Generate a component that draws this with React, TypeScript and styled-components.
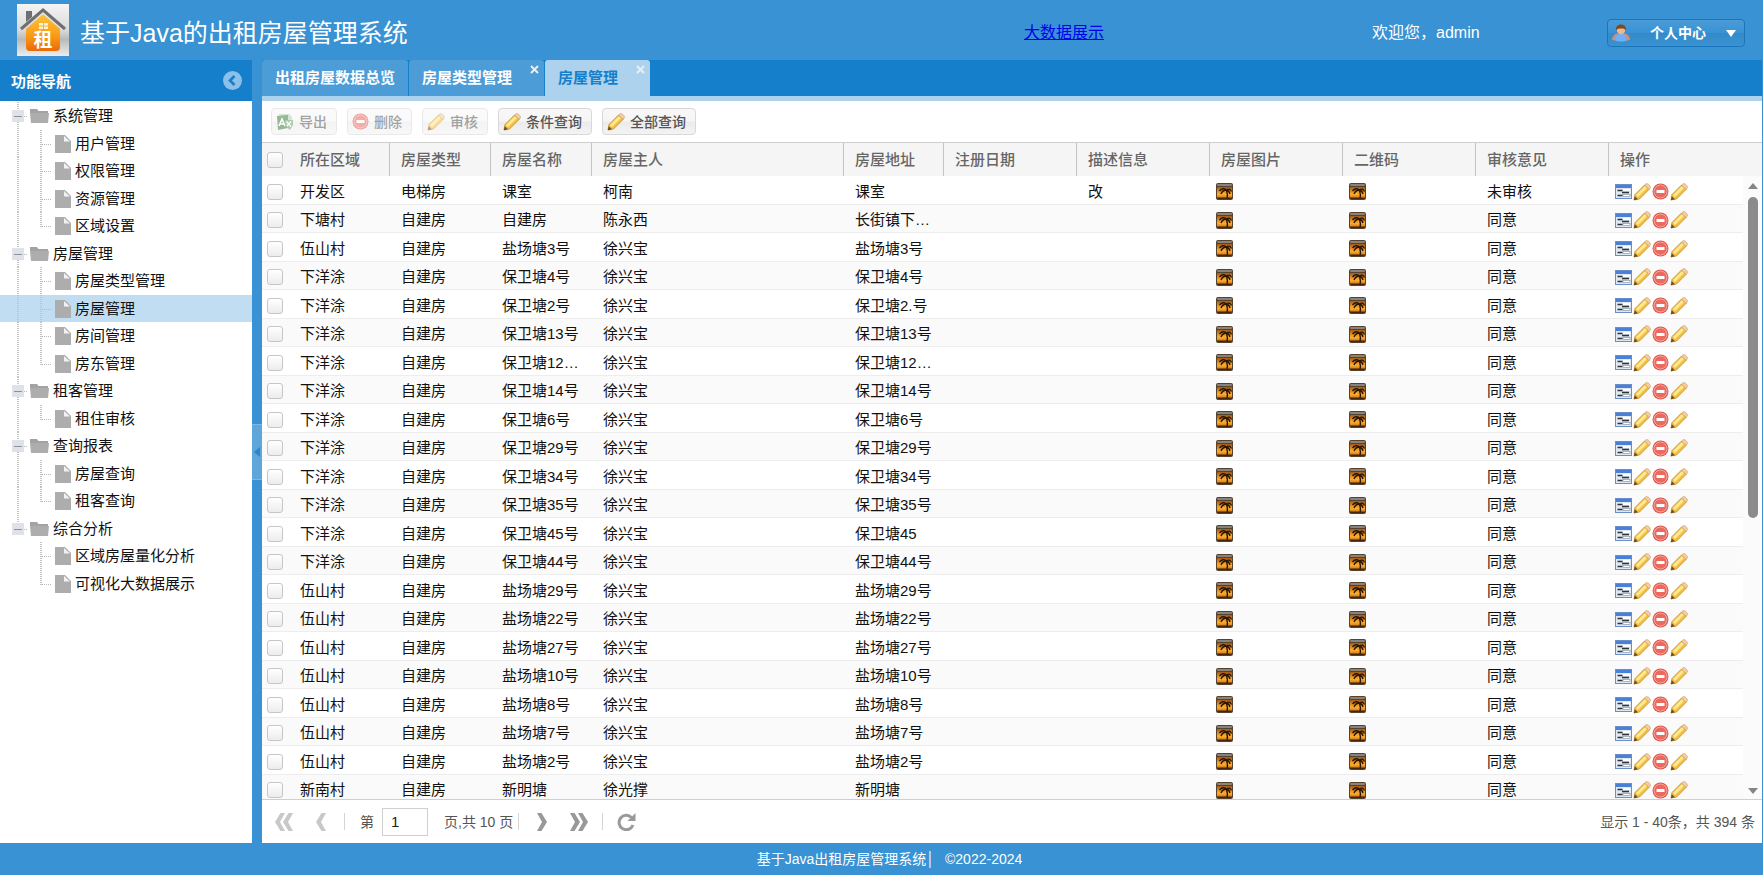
import React from 'react';
import styled, { createGlobalStyle } from 'styled-components';

const GlobalStyle = createGlobalStyle`
  * { box-sizing: border-box; }
  html, body, #root { height: 100%; }
  body {
    margin: 0;
    overflow: hidden;
    font-family: "Liberation Sans", "Noto Sans CJK SC", sans-serif;
    font-size: 15px;
    color: #111;
  }
  button, input { font: inherit; }
  svg { display: block; flex: none; }
`;

const Page = styled.div`
  display: flex;
  flex-direction: column;
  height: 100vh;
  background: #3892d3;
`;

/* ---------- top bar ---------- */

const TopBar = styled.header`
  display: grid;
  grid-template-columns: 1024fr 348fr 235fr 156px;
  align-items: center;
  height: 60px;
  flex: none;
  color: #fff;
`;

const Brand = styled.div`
  display: flex;
  align-items: center;
  gap: 11px;
  padding-left: 17px;
`;

const Title = styled.h1`
  margin: 0;
  padding-top: 6px;
  font-size: 25px;
  line-height: 36px;
  font-weight: 400;
  white-space: nowrap;
`;

const BigDataLink = styled.a`
  justify-self: start;
  padding-top: 6px;
  font-size: 16px;
  line-height: 24px;
  color: #0000ee;
  text-decoration: underline;
`;

const Welcome = styled.span`
  padding-top: 6px;
  font-size: 16px;
  line-height: 24px;
`;

const UserButton = styled.button`
  display: flex;
  align-items: center;
  width: 138px;
  height: 28px;
  margin-top: 6px;
  padding: 0 8px 0 4px;
  border: 1px solid #1c75bb;
  border-radius: 4px;
  background: linear-gradient(#4b9cd7, #3892d3 50%, #358ac8 51%, #3892d3);
  color: #fff;
  font-size: 14px;
  font-weight: 700;
  line-height: 20px;
`;

const UserLabel = styled.span`
  flex: 1;
  text-align: center;
`;

/* ---------- main area ---------- */

const Main = styled.div`
  display: flex;
  flex: 1;
  min-height: 0;
  padding-right: 1px;
`;

const Sidebar = styled.nav`
  display: flex;
  flex-direction: column;
  width: 252px;
  flex: none;
  background: #fff;
`;

const SidebarHeader = styled.div`
  display: flex;
  align-items: center;
  justify-content: space-between;
  height: 41px;
  padding: 0 10px 0 11px;
  background: #157fcc;
  color: #fff;
  font-weight: 700;
`;

const IconButton = styled.button`
  display: flex;
  align-items: center;
  justify-content: center;
  padding: 0;
  border: 0;
  background: none;
  color: inherit;
`;

const Tree = styled.ul`
  margin: 0;
  padding: 1px 0 0;
  list-style: none;
`;

const TreeItem = styled.li<{ $selected?: boolean }>`
  display: flex;
  align-items: center;
  height: 28px;
  overflow: hidden;
  background: ${(p) => (p.$selected ? '#c1ddf1' : 'transparent')};
  &:nth-child(even) { height: 27px; }
`;

const TreeLink = styled.a`
  padding-left: 4px;
  color: #111;
  line-height: 22px;
  text-decoration: none;
  white-space: nowrap;
`;

const Splitter = styled.div`
  display: flex;
  align-items: center;
  width: 10px;
  flex: none;
`;

const SplitHandle = styled.button`
  display: flex;
  align-items: center;
  justify-content: center;
  width: 10px;
  height: 56px;
  padding: 0;
  border: 1px solid #7db8e3;
  border-width: 1px 0;
  background: #5fa7db;
`;

const Panel = styled.main`
  display: flex;
  flex-direction: column;
  flex: 1;
  min-width: 0;
  background: #fff;
`;

const TabBar = styled.div`
  display: flex;
  gap: 1px;
  height: 41px;
  flex: none;
  border-bottom: 5px solid #add2ed;
  background: #157fcc;
`;

const Tab = styled.div<{ $active?: boolean }>`
  position: relative;
  display: flex;
  border-radius: 3px 3px 0 0;
  background: ${(p) => (p.$active ? '#add2ed' : '#4b9cd7')};
  color: ${(p) => (p.$active ? '#157fcc' : '#fff')};
`;

const TabButton = styled.button<{ $closable?: boolean }>`
  padding: 0 ${(p) => (p.$closable ? 32 : 13)}px 0 13px;
  border: 0;
  background: none;
  color: inherit;
  font-weight: 700;
  line-height: 22px;
`;

const TabClose = styled(IconButton)`
  position: absolute;
  top: 5px;
  right: 5px;
  color: #e4f1fa;
`;

const Toolbar = styled.div`
  display: flex;
  align-items: center;
  gap: 10px;
  height: 41px;
  flex: none;
  padding: 0 9px;
`;

const ToolButton = styled.button`
  display: flex;
  align-items: center;
  gap: 5px;
  height: 27px;
  padding: 0 9px 0 4px;
  border: 1px solid #d8d8d8;
  border-radius: 4px;
  background: linear-gradient(#f8f8f8, #f5f5f5 48%, #ebebeb 52%, #f3f3f3);
  color: #555;
  font-size: 14px;
  font-weight: 500;
  line-height: 20px;
  white-space: nowrap;
  &:disabled { opacity: 0.55; }
`;

/* ---------- grid ---------- */

const GridView = styled.div`
  position: relative;
  flex: 1;
  min-height: 0;
  overflow: hidden;
  border-top: 1px solid #cfcfcf;
`;

const Table = styled.table`
  width: 100%;
  table-layout: fixed;
  border-collapse: separate;
  border-spacing: 0;
`;

const Col = styled.col<{ $w?: number }>`
  width: ${(p) => (p.$w ? `${p.$w}px` : 'auto')};
`;

const HeadCell = styled.th`
  height: 33px;
  padding: 0 0 0 11px;
  border-right: 1px solid #c4c4c4;
  background: #f5f5f5;
  color: #666;
  font-weight: 500;
  line-height: 22px;
  text-align: left;
  white-space: nowrap;
  &:first-child { padding-left: 5px; border-right: 0; }
  &:last-child { border-right: 0; }
`;

const Row = styled.tr`
  height: 29px;
  background: #fff;
  &:nth-child(even) { height: 28px; background: #fafafa; }
`;

const Cell = styled.td<{ $pad?: number }>`
  padding: 3px 0 0 ${(p) => p.$pad ?? 11}px;
  border-bottom: 1px solid #ededed;
  line-height: 22px;
  white-space: nowrap;
`;

const Checkbox = styled.input`
  appearance: none;
  display: block;
  width: 16px;
  height: 16px;
  margin: 0;
  border: 1px solid #c6c6c6;
  border-radius: 3px;
  background: linear-gradient(#fff, #ececec);
`;

const Actions = styled.div`
  display: flex;
  gap: 1px;
`;

const Rail = styled.div`
  position: absolute;
  top: 33px;
  right: 0;
  bottom: 0;
  display: flex;
  flex-direction: column;
  align-items: center;
  gap: 8px;
  width: 19px;
  padding: 7px 0 5px;
  background: #fbfbfb;
`;

const Track = styled.div`
  display: flex;
  flex: 1;
`;

const Thumb = styled.div`
  width: 10px;
  height: 55%;
  border-radius: 5px;
  background: #8b8b8b;
`;

/* ---------- paging ---------- */

const Pager = styled.div`
  display: flex;
  align-items: center;
  height: 44px;
  flex: none;
  padding: 0 7px 0 13px;
  border-top: 1px solid #cfcfcf;
  color: #555;
  font-size: 14px;
  line-height: 20px;
`;

const PageNav = styled.div`
  display: flex;
  align-items: center;
  gap: 23px;
`;

const PageForm = styled.label`
  display: flex;
  align-items: center;
  gap: 8px;
`;

const PageInput = styled.input`
  width: 46px;
  height: 28px;
  padding: 0 8px;
  border: 1px solid #cfcfcf;
  background: #fff;
  color: #222;
  font-size: 15px;
`;

const PageTotal = styled.span`
  padding-left: 16px;
  padding-right: 4px;
`;

const Divider = styled.span<{ $l: number; $r: number }>`
  width: 1px;
  height: 17px;
  margin: 0 ${(p) => p.$r}px 0 ${(p) => p.$l}px;
  background: #d4d4d4;
`;

const Summary = styled.span`
  margin-left: auto;
`;

const Footer = styled.footer`
  display: flex;
  justify-content: center;
  gap: 10px;
  height: 32px;
  flex: none;
  padding: 6px 0 0 16px;
  color: #fff;
  font-size: 14px;
  line-height: 20px;
`;

/* ---------- drawings ---------- */

const Logo = () => (
  <svg width="52" height="52" viewBox="0 0 52 52" aria-hidden="true">
    <defs>
      <linearGradient id="plate" x1="0" y1="0" x2="0" y2="1">
        <stop offset="0" stopColor="#f4f4f4" />
        <stop offset="0.5" stopColor="#dadada" />
        <stop offset="0.68" stopColor="#b9b9b9" />
        <stop offset="1" stopColor="#ededed" />
      </linearGradient>
      <linearGradient id="house" x1="0" y1="0" x2="0" y2="1">
        <stop offset="0" stopColor="#ffc33c" />
        <stop offset="0.6" stopColor="#f99a16" />
        <stop offset="1" stopColor="#ea6a06" />
      </linearGradient>
    </defs>
    <rect width="52" height="52" fill="url(#plate)" />
    <path d="M9 7h6v6l-6 5z" fill="#6d6f73" />
    <path d="M26 10 43 25v18a4 4 0 0 1-4 4H13a4 4 0 0 1-4-4V25z" fill="url(#house)" />
    <path d="M4 25 26 6l22 19" fill="none" stroke="#6d6f73" strokeWidth="3" />
    <path d="M22 19h4v2.500h-4zM27 19h4v2.500h-4zM22 22.500h4V25h-4zM27 22.500h4V25h-4z" fill="#fff6d8" />
    <text x="26" y="43" textAnchor="middle" fontSize="19" fontWeight="700" fill="#fff">租</text>
  </svg>
);

const UserIcon = () => (
  <svg width="18" height="18" viewBox="0 0 18 18" aria-hidden="true">
    <path d="M0 16c0-3 2-6 5-6.500h8c3 .5 5 3.500 5 6.500l-3 .5H3z" fill="#c98f78" />
    <path d="M3.500 16.500C3 12.500 5 9.500 9 9.500s6 3 5.500 7c-2 1.300-9 1.300-11 0z" fill="#6fb0fb" />
    <circle cx="9" cy="6" r="4.200" fill="#f0b98c" />
    <path d="M4 6.500C3.500 2.500 6 0.500 9 .5s5.500 2 5 6C13 4.800 11 4.500 9 4.500s-4 .3-5 2z" fill="#7d4a21" />
  </svg>
);

const CaretDown = () => (
  <svg width="10" height="7" viewBox="0 0 10 7" aria-hidden="true">
    <path d="M0 0h10L5 7z" fill="#fff" />
  </svg>
);

const CollapseIcon = () => (
  <svg width="19" height="19" viewBox="0 0 19 19" aria-hidden="true">
    <circle cx="9.500" cy="9.500" r="9.500" fill="#8cc0e8" />
    <path d="M11.500 5 7 9.500l4.500 4.500" fill="none" stroke="#157fcc" strokeWidth="2.600" />
  </svg>
);

const BranchGuide = ({ last }: { last?: boolean }) => (
  <svg width="49" height="28" viewBox="0 0 49 28" aria-hidden="true">
    <path d="M18 0v8" stroke="#c4c4c4" strokeWidth="2" strokeDasharray="1 1" />
    {!last && <path d="M18 20v8" stroke="#c4c4c4" strokeWidth="2" strokeDasharray="1 1" />}
    <path d="M24 14.500h4" stroke="#b8b8b8" strokeDasharray="1 1" />
    <rect x="12" y="8" width="12" height="12" fill="#dfe3e9" />
    <path d="M14 14.500h8" stroke="#8d9299" />
    <path d="M30 7h7l1.500 2H48v2H30z" fill="#a3a3a3" />
    <path d="M30 11h19l-1 10H31z" fill="#adadad" />
  </svg>
);

const LeafGuide = ({ last, trunk }: { last?: boolean; trunk: boolean }) => (
  <svg width="71" height="28" viewBox="0 0 71 28" aria-hidden="true">
    {trunk && <path d="M18 0v28" stroke="#c4c4c4" strokeWidth="2" strokeDasharray="1 1" />}
    <path d={last ? 'M41 0v15' : 'M41 0v28'} stroke="#c4c4c4" strokeWidth="2" strokeDasharray="1 1" />
    <path d="M42 14.500h9" stroke="#b8b8b8" strokeDasharray="1 1" />
    <path d="M55 5h10l6 6v12H55z" fill="#adadad" />
    <path d="M64 6v5.500h6z" fill="#f2f2f2" />
  </svg>
);

const SplitArrow = () => (
  <svg width="6" height="10" viewBox="0 0 6 10" aria-hidden="true">
    <path d="M6 0v10L0 5z" fill="#2a86cb" />
  </svg>
);

const CloseIcon = () => (
  <svg width="9" height="9" viewBox="0 0 9 9" aria-hidden="true">
    <path d="M1 1l7 7M8 1 1 8" stroke="currentColor" strokeWidth="2" />
  </svg>
);

const ExcelIcon = () => (
  <svg width="18" height="18" viewBox="0 0 18 18" aria-hidden="true">
    <path d="M3 1h10l3 3v9H3z" fill="#b5d3ae" />
    <path d="M1 3 12 2v13L2 17z" fill="#3f7f3f" />
    <path d="m3 13 3-7 3 7M4 11h4" fill="none" stroke="#fff" strokeWidth="1.500" />
    <path d="M9 7h8v5l-3 5-5-4z" fill="#6fa568" />
    <path d="m10.500 8.500 4.500 5m0-5-4 4.500" stroke="#fff" strokeWidth="1.300" />
  </svg>
);

const MinusIcon = () => (
  <svg width="17" height="17" viewBox="0 0 17 17" aria-hidden="true">
    <circle cx="8.500" cy="8.500" r="8" fill="#e2574c" />
    <circle cx="8.500" cy="8.500" r="6.500" fill="#ea6a5f" stroke="#f5a79f" />
    <rect x="4.500" y="7" width="8" height="3" rx="0.500" fill="#fff" />
  </svg>
);

const PencilIcon = () => (
  <svg width="18" height="18" viewBox="0 0 18 18" aria-hidden="true">
    <path d="m1 17 1-5.500L11.500 2l4.500 4.500L6.500 16z" fill="#f3c044" stroke="#c08a2c" strokeWidth="0.800" />
    <path d="m3 12 9-9 2 2-9 9z" fill="#ffe892" />
    <path d="M11.500 2 13 .8c1.700-.9 5 2 4.200 4.200L16 6.500z" fill="#f5cfa3" stroke="#cc9a5c" strokeWidth="0.700" />
    <path d="m.8 17.200 1-4 3 3z" fill="#6b4a24" />
  </svg>
);

const FormIcon = () => (
  <svg width="17" height="17" viewBox="0 0 17 17" aria-hidden="true">
    <rect x="0.500" y="1.500" width="16" height="14" fill="#dfe9f6" stroke="#6a8fc8" />
    <rect x="1" y="2" width="15" height="3" fill="#4a80d8" />
    <path d="M2.500 7.500h5M2.500 12.500h5" stroke="#333" strokeWidth="1.600" />
    <path d="M7 9.500h7" stroke="#333" strokeWidth="1.600" />
    <rect x="8" y="6" width="7" height="2" fill="#fff" />
    <rect x="8" y="11.500" width="7" height="2" fill="#fff" stroke="#7b8797" strokeWidth="0.600" />
  </svg>
);

const PhotoIcon = () => (
  <svg width="17" height="17" viewBox="0 0 17 17" aria-hidden="true">
    <defs>
      <linearGradient id="dusk" x1="0" y1="0" x2="0" y2="1">
        <stop offset="0" stopColor="#a85a12" />
        <stop offset="0.6" stopColor="#ffae2e" />
        <stop offset="1" stopColor="#c06a12" />
      </linearGradient>
    </defs>
    <rect width="17" height="17" rx="2" fill="#54432f" />
    <rect x="1" y="1" width="15" height="2" rx="1" fill="#8a837c" />
    <rect x="1" y="4" width="15" height="12" rx="1" fill="url(#dusk)" />
    <path
      d="M11 16c.8-3 .4-6-.5-9M10.500 7C8.500 4.800 5.500 5.500 3.500 8M10.500 7C7.500 7 6 8.500 5 11M10.500 7c2-1.500 4-1 5 1.500M10.500 7c2 .5 3 2 3.500 4"
      fill="none"
      stroke="#2a1606"
      strokeWidth="1.400"
    />
    <path d="M1 14.500h15V15a1 1 0 0 1-1 1H2a1 1 0 0 1-1-1z" fill="#4a2408" />
  </svg>
);

const Triangle = ({ down }: { down?: boolean }) => (
  <svg width="10" height="6" viewBox="0 0 10 6" aria-hidden="true">
    <path d={down ? 'M0 0h10L5 6z' : 'M0 6h10L5 0z'} fill="#858585" />
  </svg>
);

const Chevron = ({ double, back, color }: { double?: boolean; back?: boolean; color: string }) => (
  <svg width={double ? 18 : 10} height="18" viewBox={double ? '0 0 18 18' : '0 0 10 18'} aria-hidden="true">
    <g fill={color} transform={back ? `translate(${double ? 18 : 10} 0) scale(-1 1)` : undefined}>
      <path d="M0 0h4.500L10 9l-5.500 9H0l5-9z" />
      {double && <path d="M8 0h4.500L18 9l-5.500 9H8l5-9z" />}
    </g>
  </svg>
);

const RefreshIcon = () => (
  <svg width="19" height="18" viewBox="0 0 19 18" aria-hidden="true">
    <path d="M14.500 4.500A7.200 7.200 0 1 0 16 12" fill="none" stroke="#999" strokeWidth="3" />
    <path d="M18.500 0v8h-8z" fill="#999" />
  </svg>
);

/* ---------- data ---------- */

const groups = [
  { name: '系统管理', items: ['用户管理', '权限管理', '资源管理', '区域设置'] },
  { name: '房屋管理', items: ['房屋类型管理', '房屋管理', '房间管理', '房东管理'] },
  { name: '租客管理', items: ['租住审核'] },
  { name: '查询报表', items: ['房屋查询', '租客查询'] },
  { name: '综合分析', items: ['区域房屋量化分析', '可视化大数据展示'] },
];

const treeRows = groups.flatMap((g, gi) => {
  const lastGroup = gi === groups.length - 1;
  return [
    { name: g.name, leaf: false, last: lastGroup, trunk: true },
    ...g.items.map((name, i) => ({ name, leaf: true, last: i === g.items.length - 1, trunk: !lastGroup })),
  ];
});

const tools = [
  { label: '导出', icon: <ExcelIcon />, disabled: true },
  { label: '删除', icon: <MinusIcon />, disabled: true },
  { label: '审核', icon: <PencilIcon />, disabled: true },
  { label: '条件查询', icon: <PencilIcon />, disabled: false },
  { label: '全部查询', icon: <PencilIcon />, disabled: false },
];

const columns = ['所在区域', '房屋类型', '房屋名称', '房屋主人', '房屋地址', '注册日期', '描述信息', '房屋图片', '二维码', '审核意见', '操作'];
const widths = [27, 101, 101, 101, undefined, 100, 133, 133, 133, 133, 133, 153];

type House = { area: string; kind: string; name: string; owner: string; address: string; note: string; verdict: string };

const house = (area: string, name: string, address = name, owner = '徐兴宝'): House => ({
  area, kind: '自建房', name, owner, address, note: '', verdict: '同意',
});

const houses: House[] = [
  { area: '开发区', kind: '电梯房', name: '课室', owner: '柯南', address: '课室', note: '改', verdict: '未审核' },
  house('下塘村', '自建房', '长街镇下…', '陈永西'),
  house('伍山村', '盐场塘3号'),
  house('下洋涂', '保卫塘4号'),
  house('下洋涂', '保卫塘2号', '保卫塘2.号'),
  house('下洋涂', '保卫塘13号'),
  house('下洋涂', '保卫塘12…'),
  house('下洋涂', '保卫塘14号'),
  house('下洋涂', '保卫塘6号'),
  house('下洋涂', '保卫塘29号'),
  house('下洋涂', '保卫塘34号'),
  house('下洋涂', '保卫塘35号'),
  house('下洋涂', '保卫塘45号', '保卫塘45'),
  house('下洋涂', '保卫塘44号'),
  house('伍山村', '盐场塘29号'),
  house('伍山村', '盐场塘22号'),
  house('伍山村', '盐场塘27号'),
  house('伍山村', '盐场塘10号'),
  house('伍山村', '盐场塘8号'),
  house('伍山村', '盐场塘7号'),
  house('伍山村', '盐场塘2号'),
  house('新南村', '新明塘', '新明塘', '徐光撑'),
];

const HouseRow = ({ h }: { h: House }) => (
  <Row>
    <Cell $pad={5}><Checkbox type="checkbox" aria-label={h.name} /></Cell>
    <Cell>{h.area}</Cell>
    <Cell>{h.kind}</Cell>
    <Cell>{h.name}</Cell>
    <Cell>{h.owner}</Cell>
    <Cell>{h.address}</Cell>
    <Cell />
    <Cell>{h.note}</Cell>
    <Cell $pad={6}><IconButton aria-label="房屋图片"><PhotoIcon /></IconButton></Cell>
    <Cell $pad={6}><IconButton aria-label="二维码"><PhotoIcon /></IconButton></Cell>
    <Cell>{h.verdict}</Cell>
    <Cell $pad={6}>
      <Actions>
        <IconButton aria-label="详情"><FormIcon /></IconButton>
        <IconButton aria-label="编辑"><PencilIcon /></IconButton>
        <IconButton aria-label="删除"><MinusIcon /></IconButton>
        <IconButton aria-label="审核"><PencilIcon /></IconButton>
      </Actions>
    </Cell>
  </Row>
);

export default function App() {
  return (
    <>
      <GlobalStyle />
      <Page>
        <TopBar>
          <Brand>
            <Logo />
            <Title>基于Java的出租房屋管理系统</Title>
          </Brand>
          <BigDataLink href="#bigdata">大数据展示</BigDataLink>
          <Welcome>欢迎您，admin</Welcome>
          <UserButton>
            <UserIcon />
            <UserLabel>个人中心</UserLabel>
            <CaretDown />
          </UserButton>
        </TopBar>

        <Main>
          <Sidebar>
            <SidebarHeader>
              功能导航
              <IconButton aria-label="收起"><CollapseIcon /></IconButton>
            </SidebarHeader>
            <Tree>
              {treeRows.map((r) => (
                <TreeItem key={`${r.leaf}${r.name}`} $selected={r.leaf && r.name === '房屋管理'}>
                  {r.leaf ? <LeafGuide last={r.last} trunk={r.trunk} /> : <BranchGuide last={r.last} />}
                  <TreeLink href="#nav">{r.name}</TreeLink>
                </TreeItem>
              ))}
            </Tree>
          </Sidebar>

          <Splitter>
            <SplitHandle aria-label="折叠导航"><SplitArrow /></SplitHandle>
          </Splitter>

          <Panel>
            <TabBar>
              <Tab><TabButton>出租房屋数据总览</TabButton></Tab>
              <Tab>
                <TabButton $closable>房屋类型管理</TabButton>
                <TabClose aria-label="关闭"><CloseIcon /></TabClose>
              </Tab>
              <Tab $active>
                <TabButton $closable>房屋管理</TabButton>
                <TabClose aria-label="关闭"><CloseIcon /></TabClose>
              </Tab>
            </TabBar>

            <Toolbar>
              {tools.map((t) => (
                <ToolButton key={t.label} disabled={t.disabled}>{t.icon}{t.label}</ToolButton>
              ))}
            </Toolbar>

            <GridView>
              <Table>
                <colgroup>{widths.map((w, i) => <Col key={i} $w={w} />)}</colgroup>
                <thead>
                  <tr>
                    <HeadCell><Checkbox type="checkbox" aria-label="全选" /></HeadCell>
                    {columns.map((c) => <HeadCell key={c}>{c}</HeadCell>)}
                  </tr>
                </thead>
                <tbody>{houses.map((h, i) => <HouseRow key={i} h={h} />)}</tbody>
              </Table>
              <Rail>
                <Triangle />
                <Track><Thumb /></Track>
                <Triangle down />
              </Rail>
            </GridView>

            <Pager>
              <PageNav>
                <IconButton aria-label="首页"><Chevron double back color="#c8c8c8" /></IconButton>
                <IconButton aria-label="上一页"><Chevron back color="#c8c8c8" /></IconButton>
              </PageNav>
              <Divider $l={18} $r={15} />
              <PageForm>第<PageInput defaultValue="1" /></PageForm>
              <PageTotal>页,共 10 页</PageTotal>
              <Divider $l={1} $r={18} />
              <PageNav>
                <IconButton aria-label="下一页"><Chevron color="#999" /></IconButton>
                <IconButton aria-label="末页"><Chevron double color="#999" /></IconButton>
              </PageNav>
              <Divider $l={14} $r={14} />
              <IconButton aria-label="刷新"><RefreshIcon /></IconButton>
              <Summary>显示 1 - 40条，共 394 条</Summary>
            </Pager>
          </Panel>
        </Main>

        <Footer>
          <span>基于Java出租房屋管理系统│</span>
          <span>©2022-2024</span>
        </Footer>
      </Page>
    </>
  );
}
